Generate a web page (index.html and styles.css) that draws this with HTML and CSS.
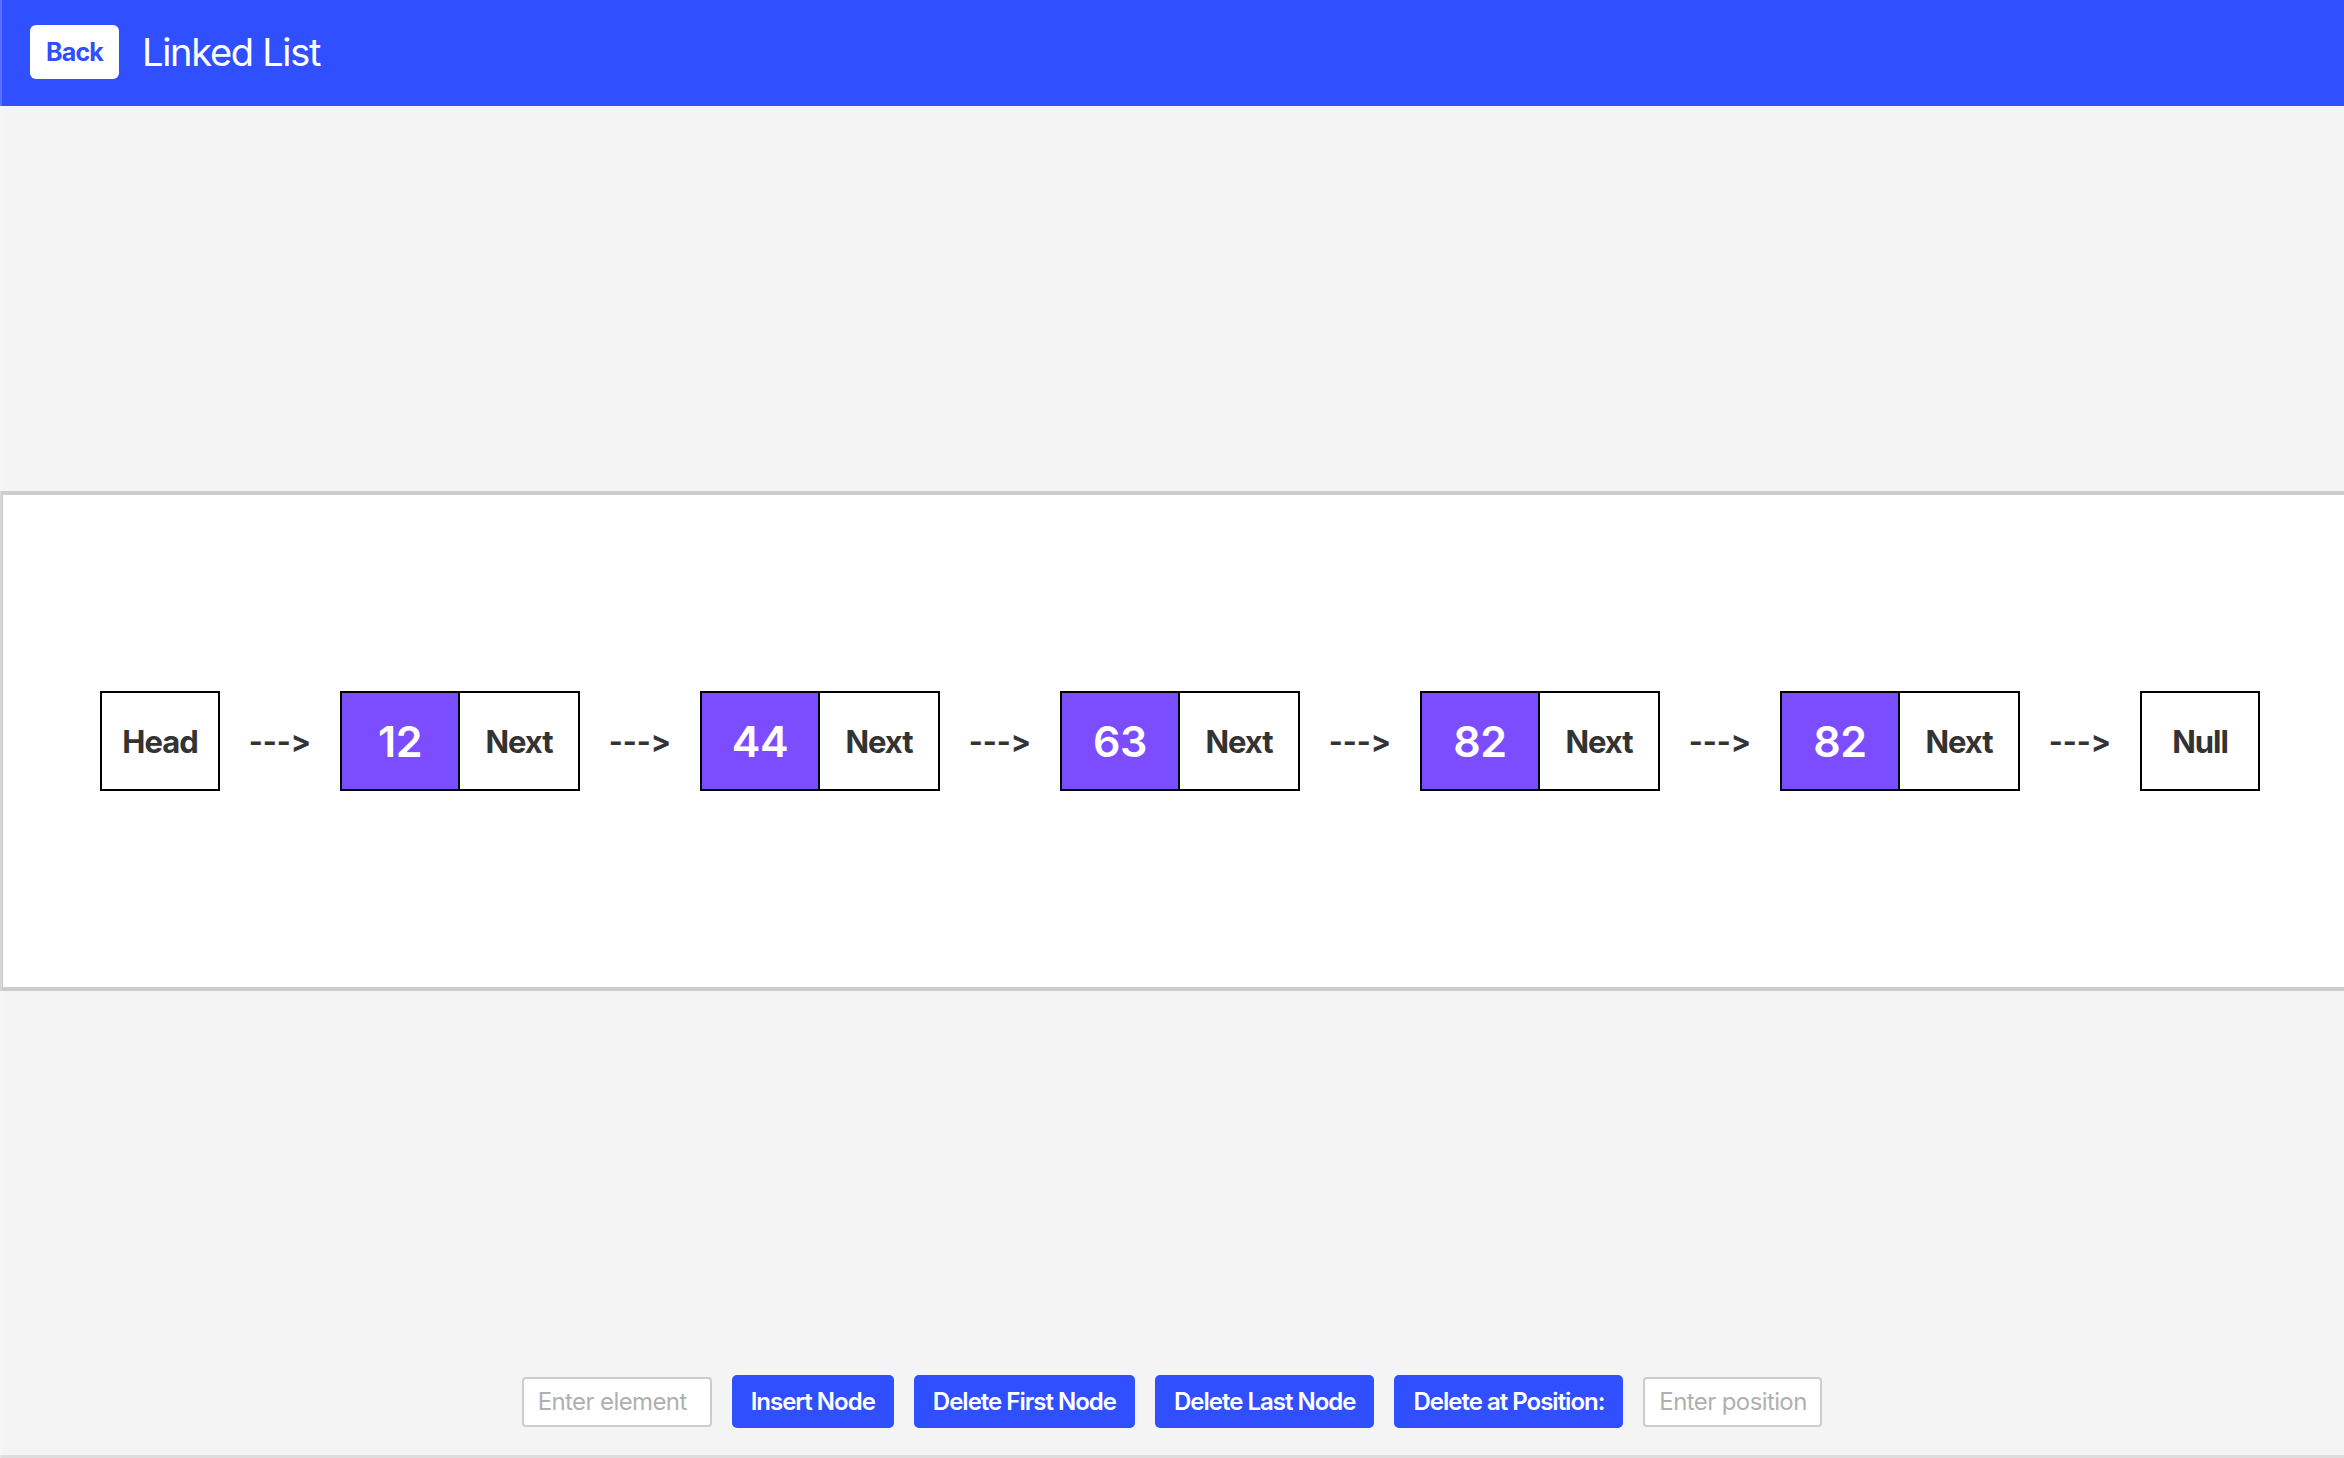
FILE: index.html
```html
<!DOCTYPE html>
<html lang="en">
<head>
<meta charset="utf-8">
<title>Linked List</title>
<link rel="stylesheet" href="styles.css">
</head>
<body>
<header class="topbar">
  <button class="back-btn">Back</button>
  <h1 class="title">Linked List</h1>
</header>
<main class="main">
  <section class="canvas">
    <div class="list">
      <div class="cell box">Head</div>
      <div class="cell arrow">---&gt;</div>
      <div class="cell box val">12</div><div class="cell box next">Next</div>
      <div class="cell arrow">---&gt;</div>
      <div class="cell box val">44</div><div class="cell box next">Next</div>
      <div class="cell arrow">---&gt;</div>
      <div class="cell box val">63</div><div class="cell box next">Next</div>
      <div class="cell arrow">---&gt;</div>
      <div class="cell box val">82</div><div class="cell box next">Next</div>
      <div class="cell arrow">---&gt;</div>
      <div class="cell box val">82</div><div class="cell box next">Next</div>
      <div class="cell arrow">---&gt;</div>
      <div class="cell box">Null</div>
    </div>
  </section>
  <div class="controls">
    <input class="field field-el" type="text" placeholder="Enter element">
    <button class="action">Insert Node</button>
    <button class="action">Delete First Node</button>
    <button class="action">Delete Last Node</button>
    <button class="action">Delete at Position:</button>
    <input class="field field-pos" type="text" placeholder="Enter position">
  </div>
  <div class="footer-line"></div>
</main>
</body>
</html>
```
FILE: styles.css
```css
html, body {
  margin: 0;
  padding: 0;
}
body {
  background: #f4f4f4;
  font-family: Inter, "Noto Sans", "Liberation Sans", sans-serif;
  font-feature-settings: "calt" 0, "liga" 0;
  font-variant-ligatures: none;
  overflow: hidden;
  height: 1458px;
}
body::before {
  content: "";
  position: fixed;
  left: 0;
  top: 0;
  bottom: 0;
  width: 2px;
  background: rgba(255, 255, 255, 0.2);
  z-index: 5;
}
.topbar {
  height: 106px;
  background: #304ffe;
  display: flex;
  align-items: center;
  padding-left: 30px;
  box-sizing: border-box;
}
.back-btn {
  width: 89px;
  height: 54px;
  border: 0;
  border-radius: 6px;
  background: #ffffff;
  color: #304ffe;
  font-family: Inter, "Noto Sans", sans-serif;
  font-size: 25px;
  font-weight: 700;
  letter-spacing: -0.8px;
  padding: 0;
  margin-top: -2px;
}
.title {
  margin: -2px 0 0 23px;
  color: #ffffff;
  font-size: 38px;
  font-weight: 400;
  letter-spacing: -1.3px;
}
.main {
  padding-top: 385px;
}
.canvas {
  height: 500px;
  box-sizing: border-box;
  border: 4px solid #cccccc;
  border-left-width: 3px;
  border-right: 0;
  background: #ffffff;
  display: flex;
  align-items: center;
  padding-left: 97px;
}
.list {
  display: flex;
  align-items: center;
}
.cell {
  width: 120px;
  height: 100px;
  box-sizing: border-box;
  display: flex;
  align-items: center;
  justify-content: center;
  color: #333333;
  font-size: 31px;
  font-weight: 700;
  letter-spacing: -1px;
}
.box {
  border: 2px solid #000000;
}
.val {
  background: #7c4dff;
  color: #ffffff;
  font-size: 43px;
  font-weight: 600;
  letter-spacing: -0.5px;
}
.next {
  border-left: 0;
}
.arrow {
  font-size: 30px;
  font-weight: 700;
  letter-spacing: 0;
  font-feature-settings: "calt" 0, "liga" 0;
}
.controls {
  margin-top: 384px;
  display: flex;
  justify-content: center;
  align-items: center;
  gap: 20px;
}
.field {
  height: 50px;
  box-sizing: border-box;
  border: 2px solid #cccccc;
  border-radius: 4px;
  background: #ffffff;
  padding: 0 10px 0 14px;
  font-family: Inter, "Noto Sans", sans-serif;
  font-size: 24px;
  letter-spacing: -0.6px;
  color: #333333;
}
.field::placeholder {
  color: #b0b0b0;
}
.field-el {
  width: 190px;
}
.field-pos {
  width: 179px;
}
.action {
  height: 53px;
  border: 0;
  border-radius: 5px;
  background: #304ffe;
  color: #ffffff;
  font-family: Inter, "Noto Sans", sans-serif;
  font-size: 24px;
  font-weight: 600;
  letter-spacing: -1px;
  padding: 0 19px;
}
.footer-line {
  margin-top: 27px;
  border-top: 3px solid #dddddd;
}
```
